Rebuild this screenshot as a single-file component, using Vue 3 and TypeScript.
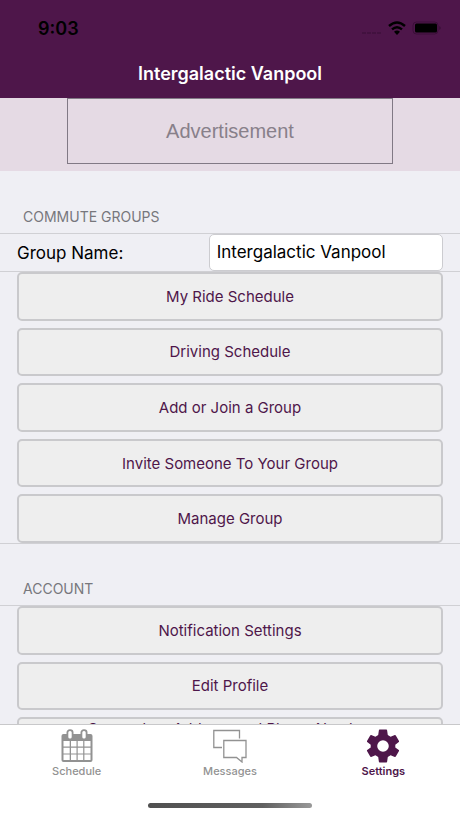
<script setup lang="ts">
import { ref } from 'vue'

const groupName = ref('Intergalactic Vanpool')
const activeTab = ref('Settings')

const groupActions: string[] = [
  'My Ride Schedule',
  'Driving Schedule',
  'Add or Join a Group',
  'Invite Someone To Your Group',
  'Manage Group',
]
const accountActions: string[] = ['Notification Settings', 'Edit Profile']
</script>

<template>
  <div class="app">
    <header class="header">
      <div class="status">
        <time>9:03</time>
        <div class="status-icons">
          <svg class="signal" viewBox="0 0 20 3" aria-hidden="true">
            <path d="M0 1h4v2H0zM5 1h4v2H5zM10 1h4v2h-4zM15 1h4v2h-4z" fill="#42113f" />
          </svg>
          <svg class="wifi" viewBox="0 0 18 14" aria-hidden="true">
            <g fill="none" stroke="#000" stroke-width="2.4">
              <path d="M1 5Q9 -2 17 5" />
              <path d="M4 8.4Q9 4 14 8.4" />
            </g>
            <path d="M6 10.8Q9 8.2 12 10.8L9 14Z" />
          </svg>
          <svg class="battery" viewBox="0 0 30 14" aria-hidden="true">
            <rect x="1" y="1" width="25" height="12" rx="3.5" fill="none" stroke="#3a0f38" />
            <rect x="3" y="2.5" width="22" height="9" rx="1.5" />
            <path d="M27.5 5q2 2 0 4z" fill="#2d0b2b" />
          </svg>
        </div>
      </div>
      <h1>{{ groupName }}</h1>
    </header>

    <aside class="ad"><div class="ad-box">Advertisement</div></aside>

    <main class="content">
      <section>
        <h2>COMMUTE GROUPS</h2>
        <div class="group">
          <div class="field">
            <label for="group-name">Group Name:</label>
            <input id="group-name" v-model="groupName" type="text" />
          </div>
          <div class="actions five">
            <button v-for="action in groupActions" :key="action" type="button">{{ action }}</button>
          </div>
        </div>
      </section>
      <section>
        <h2>ACCOUNT</h2>
        <div class="group">
          <div class="actions three">
            <button v-for="action in accountActions" :key="action" type="button">{{ action }}</button>
            <button type="button" class="long">
              Connect an Address and Phone Number<br />to Your Account
            </button>
          </div>
        </div>
      </section>
    </main>

    <footer class="footer">
      <nav class="tabs">
        <button type="button" :class="{ active: activeTab === 'Schedule' }" @click="activeTab = 'Schedule'">
          <svg viewBox="0 0 34 34" aria-hidden="true">
            <path fill="currentColor" d="M3.5 5H30.5Q32.5 5 32.5 7V31Q32.5 33 30.5 33H3.5Q1.5 33 1.5 31V7Q1.5 5 3.5 5Z" />
            <path fill="#fff" d="M3.5 12h6.2v5.6H3.5zM11 12h5.5v5.6H11zM17.7 12h5.5v5.6h-5.5zM24.4 12h6.1v5.6h-6.1zM3.5 18.8h6.2v5.6H3.5zM11 18.8h5.5v5.6H11zM17.7 18.8h5.5v5.6h-5.5zM24.4 18.8h6.1v5.6h-6.1zM3.5 25.6h6.2V31H3.5zM11 25.6h5.5V31H11zM17.7 25.6h5.5V31h-5.5zM24.4 25.6h6.1V31h-6.1z" />
            <g fill="#fff" stroke="currentColor" stroke-width="1.8">
              <rect x="7.4" y="1.2" width="5.2" height="9.2" rx="2.4" />
              <rect x="21.4" y="1.2" width="5.2" height="9.2" rx="2.4" />
            </g>
          </svg>
          <span>Schedule</span>
        </button>
        <button type="button" :class="{ active: activeTab === 'Messages' }" @click="activeTab = 'Messages'">
          <svg viewBox="0 0 34 34" aria-hidden="true">
            <path d="M9 18.5H.8V1.5H26.5V9.5M10.8 11.5H33V28.5H29V33L23.5 28.5H10.8Z" fill="none" stroke="currentColor" stroke-width="1.3" />
          </svg>
          <span>Messages</span>
        </button>
        <button type="button" :class="{ active: activeTab === 'Settings' }" @click="activeTab = 'Settings'">
          <svg viewBox="0 0 34 34" aria-hidden="true">
            <path fill="currentColor" fill-rule="evenodd" d="M13.6 .6H20.4Q21 .6 21.1 1.3L21.8 6.1L24.6 7.7L28.8 6Q29.4 5.8 29.8 6.4L33 12Q33.3 12.6 32.8 13L29.3 15.7V18.4L32.8 21Q33.3 21.5 33 22L29.8 27.6Q29.4 28.2 28.8 28L24.6 26.3L21.8 27.9L21.1 32.7Q21 33.4 20.4 33.4H13.6Q13 33.4 12.9 32.7L12.2 27.9L9.4 26.3L5.2 28Q4.6 28.2 4.2 27.6L1 22Q.7 21.5 1.2 21L4.7 18.4V15.7L1.2 13Q.7 12.6 1 12L4.2 6.4Q4.6 5.8 5.2 6L9.4 7.7L12.2 6.1L12.9 1.3Q13 .6 13.6 .6ZM17 11.2A5.8 5.8 0 1 0 17 22.8A5.8 5.8 0 1 0 17 11.2Z" />
          </svg>
          <span>Settings</span>
        </button>
      </nav>
      <div class="home-bar"></div>
    </footer>
  </div>
</template>

<style>
body {
  margin: 0;
  background: #efeff4;
}
</style>

<style scoped>
.app {
  display: flex;
  flex-direction: column;
  height: 100vh;
  overflow: hidden;
  background: #efeff4;
  color: #000;
  font-family: Inter, "Liberation Sans", sans-serif;
}

.header {
  flex: none;
  padding: 16px 18px 12px 38px;
  background: #4e164a;
}

.status {
  display: flex;
  align-items: center;
  justify-content: space-between;
  height: 24px;
  font-size: 18px;
  font-weight: 600;
}

.status-icons {
  display: flex;
  align-items: center;
  gap: 6px;
}

.signal {
  width: 20px;
  height: 3px;
  margin-top: 8px;
}

.wifi {
  width: 18px;
  height: 14px;
}

.battery {
  width: 30px;
  height: 14px;
}

h1 {
  margin: 22px 20px 0 0;
  color: #fff;
  font-size: 18px;
  font-weight: 600;
  line-height: 24px;
  text-align: center;
}

.ad {
  display: flex;
  flex: none;
  justify-content: center;
  padding-bottom: 7px;
  background: #e5dae4;
}

.ad-box {
  box-sizing: border-box;
  width: 71%;
  border: 1px solid #817985;
  color: #88808a;
  font-family: "Liberation Sans", sans-serif;
  font-size: 20px;
  line-height: 64px;
  text-align: center;
}

.content {
  flex: 1;
  min-height: 0;
  overflow-y: auto;
  scrollbar-width: none;
}

h2 {
  margin: 0;
  padding: 36px 23px 6px;
  color: #77777c;
  font-size: 14px;
  font-weight: 400;
  line-height: 20px;
}

section + section h2 {
  padding-top: 35px;
}

.group {
  border-top: 1px solid #d0d0d4;
  border-bottom: 1px solid #d0d0d4;
}

.field {
  display: flex;
  align-items: center;
  justify-content: space-between;
  padding: 0 17px;
  border-bottom: 1px solid #d0d0d4;
  font-size: 17px;
}

.field input {
  box-sizing: border-box;
  width: 55%;
  height: 37px;
  padding: 0 7px 2px;
  border: 1px solid #ccccd0;
  border-radius: 5px;
  background: #fff;
  color: #000;
  font: inherit;
}

.actions {
  display: grid;
  grid-auto-rows: 1fr;
  gap: 7px;
  margin: 0 17px;
}

.five {
  min-height: 271px;
}

.three {
  min-height: 160px;
}

.actions button {
  padding: 0;
  border: 2px solid #c9c9cc;
  border-radius: 5px;
  background: #eee;
  color: #4e164a;
  font: inherit;
  font-size: 15px;
}

.actions .long {
  padding-bottom: 8px;
  line-height: 18px;
}

.footer {
  flex: none;
  border-top: 1px solid #c8c8ca;
  background: #fff;
}

.tabs {
  display: flex;
}

.tabs button {
  display: flex;
  flex: 1;
  flex-direction: column;
  align-items: center;
  gap: 1px;
  padding: 4px 0 0;
  border: 0;
  background: none;
  color: #929292;
  font: inherit;
  font-size: 11px;
  font-weight: 500;
  line-height: 14px;
}

.tabs .active {
  color: #4e164a;
  font-weight: 600;
}

.tabs svg {
  width: 34px;
  height: 34px;
}

.home-bar {
  width: 164px;
  height: 5px;
  margin: 25px auto 10px;
  border-radius: 3px;
  background: linear-gradient(to right, #505050, #606060 70%, #999);
}
</style>
